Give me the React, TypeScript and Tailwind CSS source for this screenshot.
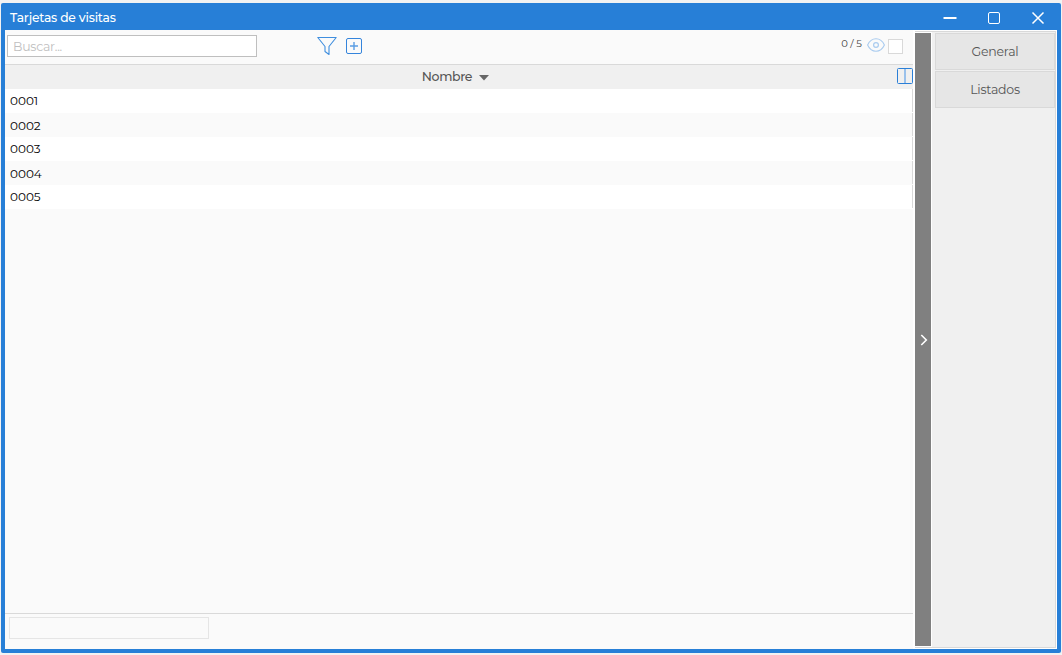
import React, { useState } from 'react';

interface Card {
  id: number;
  name: string;
}

const CARDS: Card[] = [
  { id: 1, name: '0001' },
  { id: 2, name: '0002' },
  { id: 3, name: '0003' },
  { id: 4, name: '0004' },
  { id: 5, name: '0005' },
];

const ACTIONS = ['General', 'Listados'];

const TitleBar = () => (
  <div className="h-[27px] shrink-0 flex items-center justify-between pl-[5px] pr-[12px] text-white">
    <span className="text-[12.3px] leading-none font-medium pt-[3px] tracking-[-0.2px]">Tarjetas de visitas</span>
    <div className="flex items-center gap-[30px] pt-[3px]">
      <button aria-label="Minimizar">
        <svg className="block" width="14" height="14" viewBox="0 0 14 14" fill="none" stroke="currentColor">
          <path d="M0.5 7H13.5" strokeWidth="2" />
        </svg>
      </button>
      <button aria-label="Maximizar">
        <svg className="block" width="14" height="14" viewBox="0 0 14 14" fill="none" stroke="currentColor">
          <rect x="1.5" y="1.5" width="11" height="11" rx="1.5" />
        </svg>
      </button>
      <button aria-label="Cerrar">
        <svg className="block" width="14" height="14" viewBox="0 0 14 14" fill="none" stroke="currentColor">
          <path d="M1.5 1.5L12.5 12.5M12.5 1.5L1.5 12.5" strokeWidth="1.5" />
        </svg>
      </button>
    </div>
  </div>
);

const Toolbar = ({ search, onSearch }: { search: string; onSearch: (value: string) => void }) => (
  <div className="h-[35px] shrink-0 flex items-start border-b border-[#d9d9d9] pl-[2px] pt-[5px]">
    <input
      value={search}
      onChange={e => onSearch(e.target.value)}
      placeholder="Buscar..."
      className="w-[250px] h-[22px] bg-white border border-[#bfbfbf] px-[5px] pt-px text-[12.5px] tracking-[-0.25px] outline-none placeholder:text-[#bfbfbf]"
    />
    <button className="ml-[60px] mt-[1px]" aria-label="Filtrar">
      <svg className="block" width="20" height="20" viewBox="0 0 20 20" fill="none" stroke="#3f8ede" strokeLinejoin="round">
        <path d="M0.8 1.5H19.2L12 10.5V18.5L8 15.5V10.5Z" strokeWidth="1.1" />
      </svg>
    </button>
    <button className="ml-[8px] mt-[2px]" aria-label="Nuevo">
      <svg className="block" width="18" height="18" viewBox="0 0 18 18" fill="none" stroke="#3585dc">
        <rect x="1.5" y="1.5" width="15" height="15" rx="1.5" />
        <path d="M9 5V13M5 9H13" strokeWidth="1.4" stroke="#5a9de3" />
      </svg>
    </button>
    <div className="ml-auto mr-[10px] flex items-start">
      <span className="pt-[3px] text-[10px] leading-[12px] text-[#444]">0 / 5</span>
      <svg className="block ml-[5px] mt-[3px]" width="18" height="14" viewBox="0 0 18 14" fill="none" stroke="#a9cbef">
        <path d="M0.6 7C4.4 -1.3 13.6 -1.3 17.4 7C13.6 15.3 4.4 15.3 0.6 7Z" strokeWidth="1.1" />
        <circle cx="9" cy="7" r="2.4" strokeWidth="1.2" />
      </svg>
      <span className="ml-[3px] mt-[4px] w-[15px] h-[15px] bg-white border border-[#d9d9d9]" />
    </div>
  </div>
);

const CardTable = ({ cards }: { cards: Card[] }) => (
  <div className="flex-1 flex flex-col">
    <div className="h-[24px] bg-[#f0f0f0] flex">
      <div className="flex-1 pl-[9px] flex items-center justify-center text-[12.5px] font-medium text-[#555] tracking-[-0.35px]">
        <span>Nombre</span>
        <svg className="ml-[7px] mt-[2px]" width="10" height="6" viewBox="0 0 10 6" fill="#666">
          <path d="M0 0H10L5 5.5Z" />
        </svg>
      </div>
      <svg className="shrink-0 mt-[3px]" width="16" height="16" viewBox="0 0 16 16" fill="none" stroke="#2a7fd7">
        <rect x="0.5" y="0.5" width="15" height="15" rx="1" />
        <path d="M8 1V15" stroke="#9ac1eb" strokeWidth="2" />
      </svg>
    </div>
    {cards.map((card, i) => (
      <div key={card.id} className={`h-[24px] flex ${i % 2 ? 'bg-[#fafafa]' : 'bg-white'}`}>
        <span className={`flex-1 pl-[5px] text-xs leading-[24px] text-black ${i % 2 ? 'pt-[1px]' : ''}`}>
          {card.name}
        </span>
        <span className="w-px h-[23px] bg-[#d9d9d9]" />
      </div>
    ))}
  </div>
);

const App = () => {
  const [search, setSearch] = useState('');
  const [panelOpen, setPanelOpen] = useState(true);
  const cards = CARDS.filter(c => c.name.includes(search));

  return (
    <div className="h-screen bg-[#f2f2f2] pt-[3px] pl-px pr-px pb-[2px] font-['Montserrat','Inter',sans-serif]">
      <div className="h-full flex flex-col bg-[#277fd7] rounded-[2px] px-[4px] pb-[4px]">
        <TitleBar />
        <div className="flex-1 flex bg-white">
          <div className="flex-1 mr-[2px] flex flex-col bg-[#fafafa]">
            <Toolbar search={search} onSearch={setSearch} />
            <CardTable cards={cards} />
            <div className="h-[36px] shrink-0 border-t border-[#d9d9d9] pl-[4px] pt-[3px]">
              <div className="w-[200px] h-[22px] border border-[#e5e5e5]" />
            </div>
          </div>

          <div className="flex py-px pr-px">
            <div className="flex border-y border-r border-[#d9d9d9]">
              <button
                onClick={() => setPanelOpen(!panelOpen)}
                className="w-[17px] flex items-center justify-center bg-[#808080] text-white border-y border-r border-white pl-[2px]"
                aria-label="Panel"
              >
                <svg className="block shrink-0" width="8" height="12" viewBox="0 0 8 12" fill="none" stroke="currentColor">
                  <path d="M1.3 1L6.3 6L1.3 11" strokeWidth="1.6" />
                </svg>
              </button>
              {panelOpen && (
                <div className="w-[123px] flex flex-col gap-px bg-[#f0f0f0] pl-[3px] pt-px">
                  {ACTIONS.map(label => (
                    <button key={label} className="h-[37px] pt-[2px] border border-[#d9d9d9] bg-[#e6e6e6] text-[12.5px] tracking-[-0.22px] text-[#555]">
                      {label}
                    </button>
                  ))}
                </div>
              )}
            </div>
          </div>
        </div>
      </div>
    </div>
  );
};

export default App;
